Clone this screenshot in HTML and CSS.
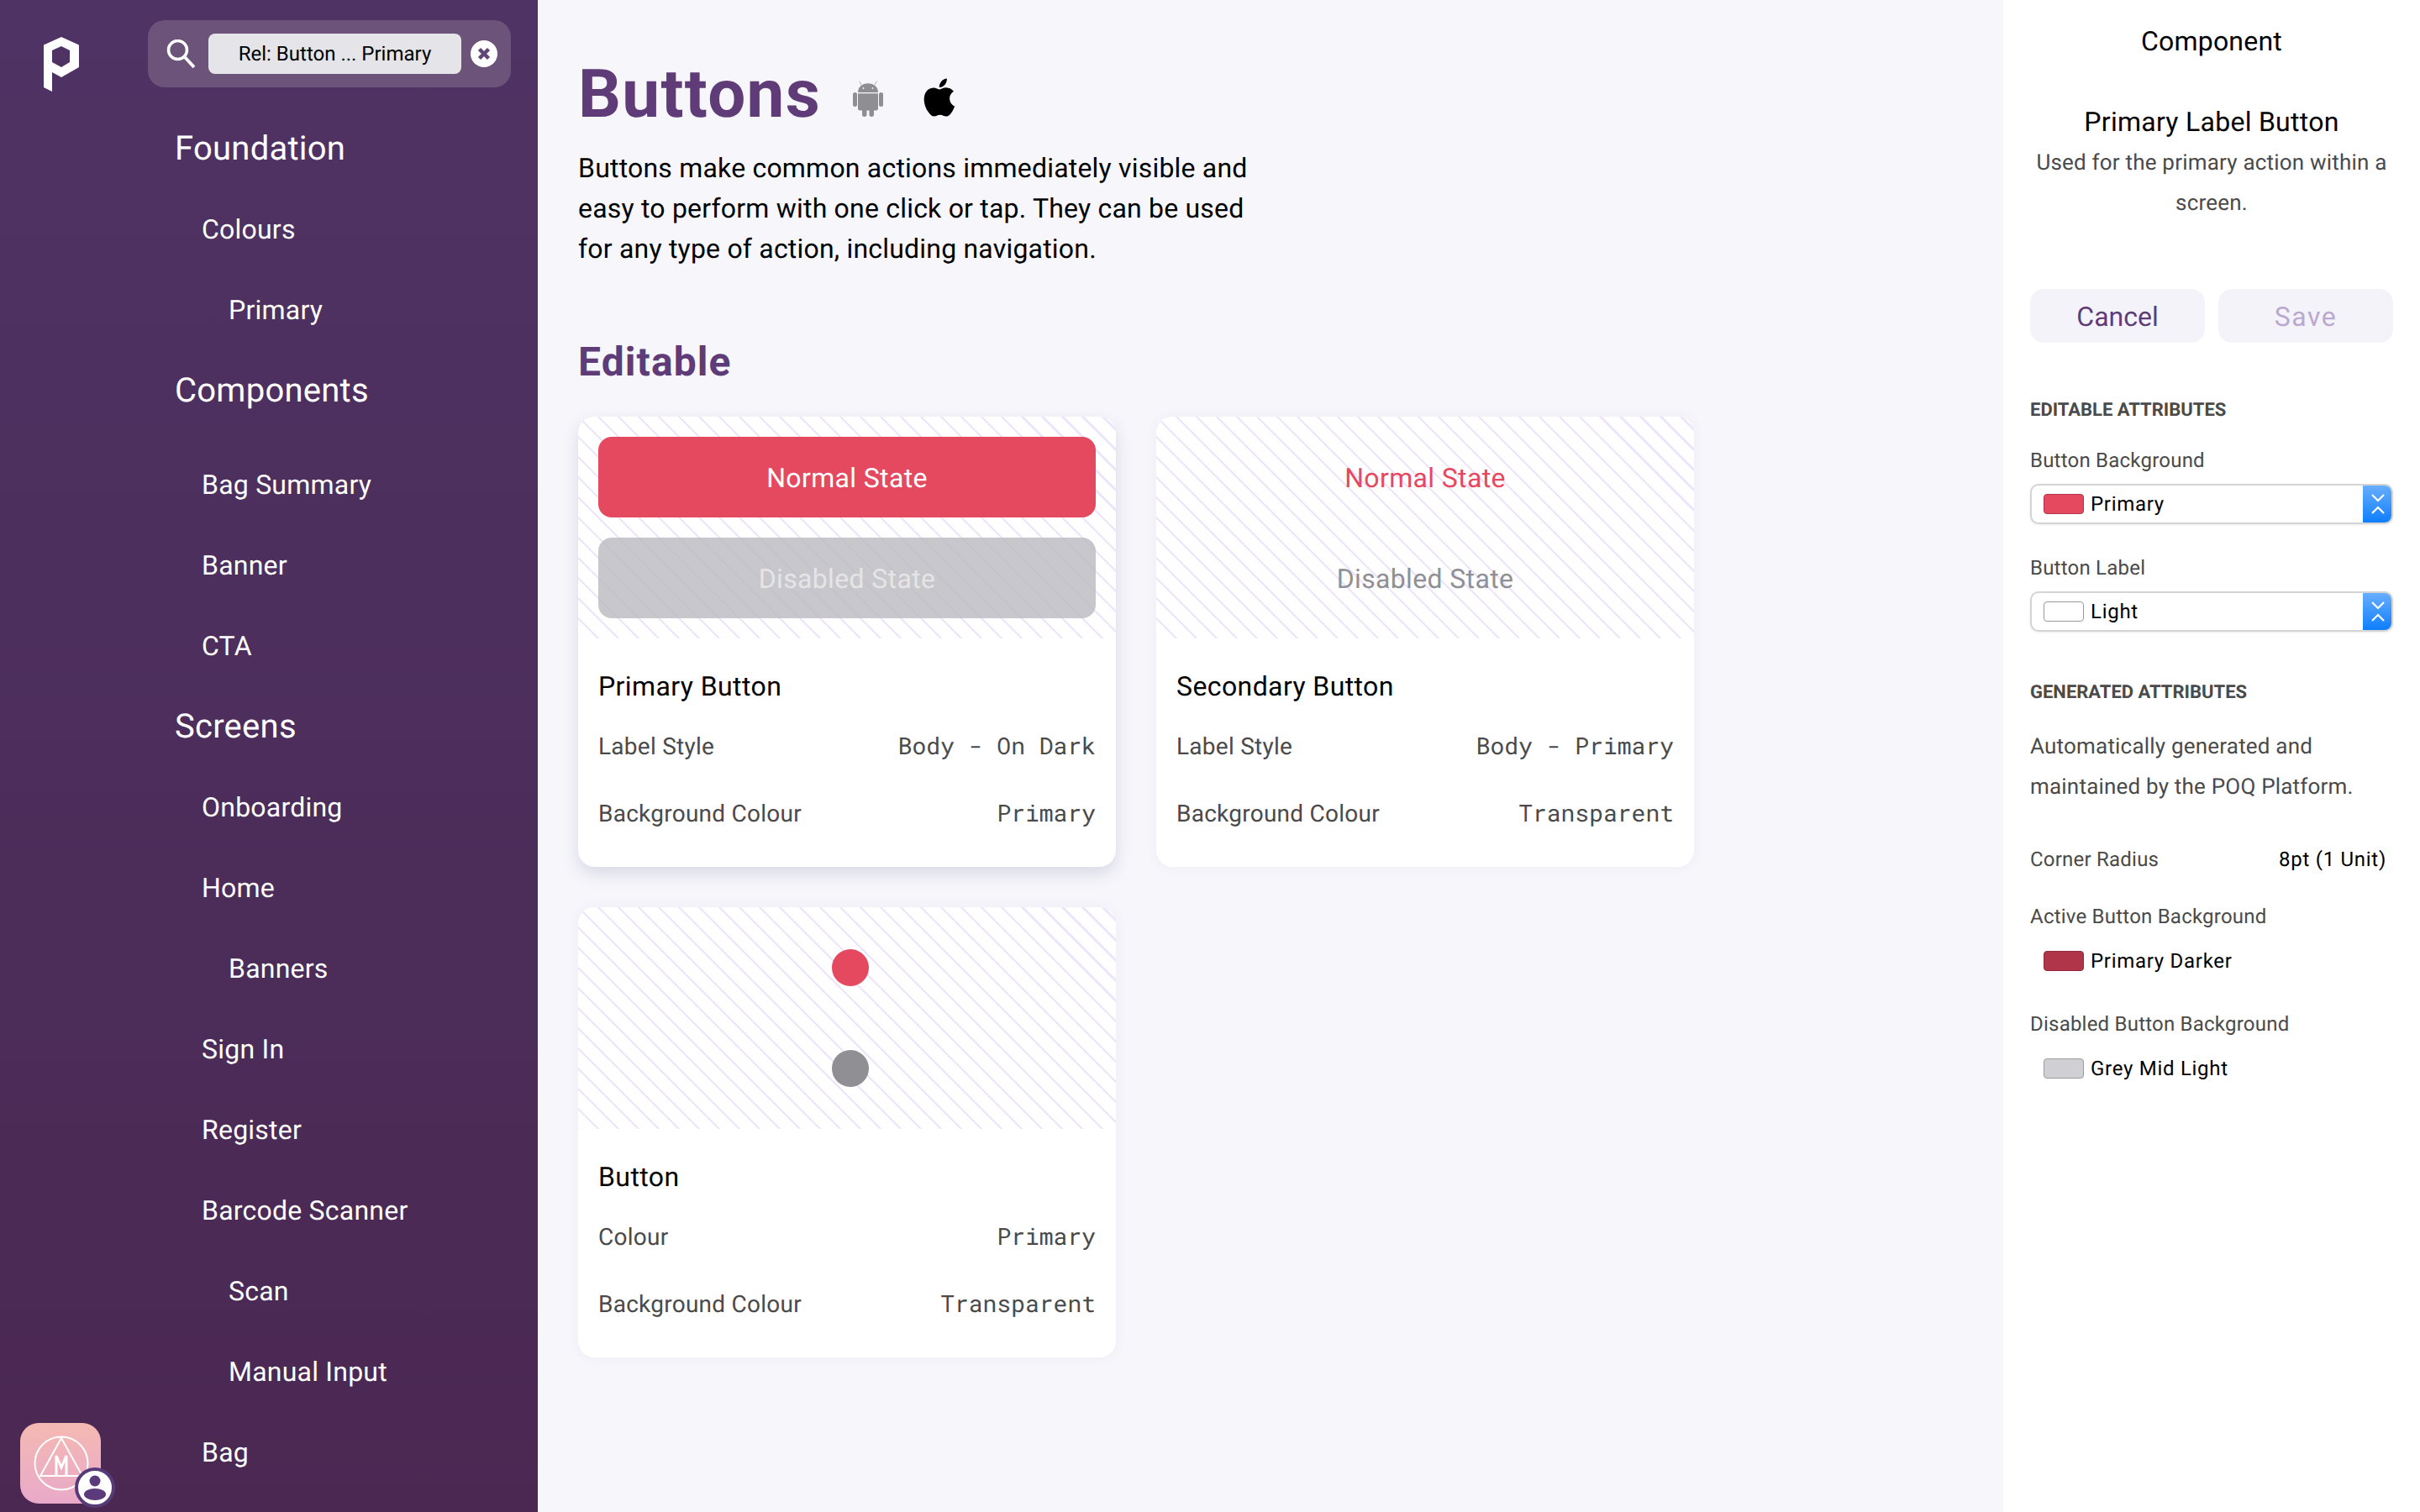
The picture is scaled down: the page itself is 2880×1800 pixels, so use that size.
FILE: index.html
```html
<!DOCTYPE html>
<html lang="en">
<head>
<meta charset="utf-8">
<title>Buttons</title>
<link rel="stylesheet" href="styles.css">
</head>
<body>
<div class="app">
  <aside class="sidebar">
    <div class="rail">
      <svg class="logo" viewBox="0 0 42 65"><path fill="#fff" fill-rule="evenodd" d="M21 0 42 9.500V36L21 48 10 42V65L0 60V9.500ZM21 11 10 16V30L21 36 31 30V16Z"/></svg>
      <div class="avatar">
        <svg class="avatar-art" viewBox="0 0 96 96"><circle cx="49" cy="48" r="31.500" fill="none" stroke="#fff" stroke-width="2"/><path d="M49 18 24 63H74Z" fill="none" stroke="#fff" stroke-width="2"/><path d="M43 62V39L49 53 55 39V62" fill="none" stroke="#fff" stroke-width="3"/></svg>
        <span class="avatar-badge">
          <svg viewBox="0 0 40 40"><circle cx="20" cy="12" r="6.500" fill="#5b3b7c"/><ellipse cx="20" cy="28" rx="13" ry="7" fill="#5b3b7c"/></svg>
        </span>
      </div>
    </div>
    <div class="navcol">
      <div class="search">
        <svg class="search-icon" viewBox="0 0 34 34"><circle cx="13.500" cy="12.500" r="11" fill="none" stroke="#fff" stroke-width="3.500"/><path d="M21 20 33 33" stroke="#fff" stroke-width="3.800"/></svg>
        <div class="search-pill">Rel: Button ... Primary</div>
        <svg class="search-clear" viewBox="0 0 32 32"><circle cx="16" cy="16" r="16" fill="#fff"/><path d="M10.500 10.500 21.500 21.500M21.500 10.500 10.500 21.500" stroke="#5f4674" stroke-width="4.500"/></svg>
      </div>
      <nav class="tree">
        <div class="n n0">Foundation</div>
        <div class="n n1">Colours</div>
        <div class="n n2">Primary</div>
        <div class="n n0 gapped">Components</div>
        <div class="n n1">Bag Summary</div>
        <div class="n n1">Banner</div>
        <div class="n n1">CTA</div>
        <div class="n n0">Screens</div>
        <div class="n n1">Onboarding</div>
        <div class="n n1">Home</div>
        <div class="n n2">Banners</div>
        <div class="n n1">Sign In</div>
        <div class="n n1">Register</div>
        <div class="n n1">Barcode Scanner</div>
        <div class="n n2">Scan</div>
        <div class="n n2">Manual Input</div>
        <div class="n n1">Bag</div>
      </nav>
    </div>
  </aside>

  <main class="main">
    <div class="title-row">
      <h1>Buttons</h1>
      <svg class="android" viewBox="0 0 36 43" fill="#8f8f93"><path d="M10 5 7.600.5M26 5 28.400.5" stroke="#a9a9ad" stroke-width=".9"/><path d="M6 14C6 7.500 11 3.300 18 3.300S30 7.500 30 14Z"/><path d="M6 15.300H30V33A2.500 2.500 0 0 1 27.500 35.500H8.500A2.500 2.500 0 0 1 6 33Z"/><rect x="0" y="14" width="5" height="17" rx="2.500"/><rect x="31" y="14" width="5" height="17" rx="2.500"/><rect x="11" y="30" width="5.500" height="13" rx="2.750"/><rect x="19.500" y="30" width="5.500" height="13" rx="2.750"/><circle cx="12.500" cy="9" r=".9" fill="#f6f6fb"/><circle cx="23.500" cy="9" r=".9" fill="#f6f6fb"/></svg>
      <svg class="apple" viewBox="0 0 24 24"><path fill="#000" d="M18.710 19.500c-.83 1.240-1.710 2.450-3.050 2.470-1.340.03-1.770-.79-3.290-.79-1.530 0-2 .77-3.270.82-1.310.05-2.300-1.320-3.140-2.530C4.250 17 2.940 12.450 4.700 9.390c.87-1.520 2.430-2.480 4.120-2.510 1.280-.02 2.500.87 3.290.87.78 0 2.260-1.070 3.810-.91.65.03 2.470.26 3.640 1.980-.09.06-2.170 1.280-2.150 3.810.03 3.020 2.650 4.030 2.680 4.040-.03.07-.42 1.440-1.380 2.830M13 3.500c.73-.83 1.940-1.460 2.940-1.500.13 1.170-.34 2.350-1.040 3.190-.69.85-1.830 1.510-2.950 1.420-.15-1.150.41-2.350 1.050-3.110z"/></svg>
    </div>
    <p class="intro">Buttons make common actions immediately visible and easy to perform with one click or tap. They can be used for any type of action, including navigation.</p>
    <h2>Editable</h2>
    <div class="cards">
      <article class="card card-active">
        <div class="stage stage-primary">
          <div class="btn btn-red">Normal State</div>
          <div class="btn btn-grey">Disabled State</div>
        </div>
        <div class="card-body">
          <h3>Primary Button</h3>
          <div class="row"><span>Label Style</span><code>Body - On Dark</code></div>
          <div class="row"><span>Background Colour</span><code>Primary</code></div>
        </div>
      </article>
      <article class="card">
        <div class="stage stage-primary">
          <div class="btn btn-text-red">Normal State</div>
          <div class="btn btn-text-grey">Disabled State</div>
        </div>
        <div class="card-body">
          <h3>Secondary Button</h3>
          <div class="row"><span>Label Style</span><code>Body - Primary</code></div>
          <div class="row"><span>Background Colour</span><code>Transparent</code></div>
        </div>
      </article>
      <article class="card">
        <div class="stage stage-dots">
          <span class="dot dot-red"></span>
          <span class="dot dot-grey"></span>
        </div>
        <div class="card-body">
          <h3>Button</h3>
          <div class="row"><span>Colour</span><code>Primary</code></div>
          <div class="row"><span>Background Colour</span><code>Transparent</code></div>
        </div>
      </article>
    </div>
  </main>

  <aside class="panel">
    <div class="panel-title">Component</div>
    <div class="panel-name">Primary Label Button</div>
    <p class="panel-desc">Used for the primary action within a screen.</p>
    <div class="panel-actions">
      <div class="pbtn">Cancel</div>
      <div class="pbtn pbtn-off">Save</div>
    </div>
    <div class="caps caps-first">EDITABLE ATTRIBUTES</div>
    <div class="lab lab-first">Button Background</div>
    <div class="select">
      <span class="sw sw-red"></span><span class="val">Primary</span>
      <span class="stepper"><svg viewBox="0 0 36 48"><path d="M11 13 18 20 25 13M11 35 18 28 25 35" fill="none" stroke="#fff" stroke-width="2.200"/></svg></span>
    </div>
    <div class="lab lab-next">Button Label</div>
    <div class="select">
      <span class="sw sw-white"></span><span class="val">Light</span>
      <span class="stepper"><svg viewBox="0 0 36 48"><path d="M11 13 18 20 25 13M11 35 18 28 25 35" fill="none" stroke="#fff" stroke-width="2.200"/></svg></span>
    </div>
    <div class="caps caps-second">GENERATED ATTRIBUTES</div>
    <p class="auto">Automatically generated and maintained by the POQ Platform.</p>
    <div class="radius"><span class="lab">Corner Radius</span><span class="val">8pt (1 Unit)</span></div>
    <div class="lab lab-active">Active Button Background</div>
    <div class="static"><span class="sw sw-dark"></span><span class="val">Primary Darker</span></div>
    <div class="lab lab-disabled">Disabled Button Background</div>
    <div class="static"><span class="sw sw-grey"></span><span class="val">Grey Mid Light</span></div>
  </aside>
</div>
</body>
</html>
```
FILE: styles.css
```css
* { box-sizing: border-box; }
html, body { margin: 0; padding: 0; width: 2880px; height: 1800px; overflow: hidden; }
body { font-family: Roboto, "Liberation Sans", sans-serif; background: #f6f6fb; color: #000; text-rendering: geometricPrecision; }
h1, h2, h3, p { margin: 0; font-weight: inherit; }

.app { display: flex; width: 2880px; height: 1800px; }

/* sidebar */
.sidebar { width: 640px; height: 1800px; flex: none; display: flex; overflow: hidden; background: linear-gradient(#4f3364, #4a2852); color: #fff; }
.rail { width: 176px; flex: none; display: flex; flex-direction: column; justify-content: space-between; padding: 44px 0 10px 24px; }
.logo { width: 42px; height: 65px; margin-left: 28px; display: block; }
.avatar { position: relative; width: 96px; height: 96px; border-radius: 22px; background: linear-gradient(#f4b9b2, #e9a9c9); }
.avatar-art { display: block; width: 96px; height: 96px; }
.avatar-badge { position: absolute; left: 65px; top: 53px; width: 48px; height: 48px; border-radius: 50%; background: #fff; border: 4px solid #573b78; }
.avatar-badge svg { display: block; width: 40px; height: 40px; }
.navcol { width: 432px; flex: none; padding-top: 24px; }
.search { height: 80px; border-radius: 20px; background: #6c5379; display: flex; align-items: center; padding: 0 17px 0 22px; }
.search-icon { width: 34px; height: 34px; flex: none; }
.search-pill { width: 301px; height: 48px; margin-left: 16px; flex: none; border-radius: 8px; background: #e5e4e9; color: #000; font-size: 24px; line-height: 48px; text-align: center; }
.search-clear { width: 32px; height: 32px; margin-left: 11px; flex: none; }
.tree { margin-top: 25px; }
.n { height: 96px; line-height: 96px; white-space: nowrap; }
.n0 { font-size: 40px; letter-spacing: .25px; padding-left: 32px; }
.n1 { font-size: 32px; letter-spacing: .22px; padding-left: 64px; }
.n2 { font-size: 32px; letter-spacing: .22px; padding-left: 96px; }
.gapped { margin-bottom: 16px; }

/* main */
.main { flex: 1; min-width: 0; padding: 64px 0 0 48px; }
.title-row { display: flex; align-items: flex-start; height: 96px; }
h1 { font-size: 80px; letter-spacing: 1.300px; line-height: 97px; font-weight: 700; color: #5f3b78; }
.android { width: 36px; height: 43px; margin: 32px 0 0 38px; flex: none; }
.apple { width: 54px; height: 54px; margin: 24.500px 0 0 40px; flex: none; }
.intro { width: 810px; margin-top: 16px; font-size: 32px; letter-spacing: .2px; line-height: 48px; }
h2 { margin-top: 81px; margin-bottom: -1px; font-size: 48px; letter-spacing: 1.100px; line-height: 60px; font-weight: 700; color: #5f3b78; }
.cards { display: grid; grid-template-columns: 640px 640px; gap: 48px; margin-top: 36px; }
.card { height: 536px; border-radius: 20px; overflow: hidden; background: #fff; box-shadow: 0 0 16px rgba(60, 50, 120, .05); }
.card-active { box-shadow: 0 8px 20px rgba(60, 55, 100, .15); }
.stage { height: 264px; background: repeating-linear-gradient(45deg, #eee5fc 0, #eee5fc 1.400px, #fff 1.400px, #fff 15.570px, #eee5fc 15.570px, #eee5fc 16.971px); }
.stage-primary { display: flex; flex-direction: column; gap: 24px; padding: 24px; }
.stage-dots { display: flex; flex-direction: column; align-items: center; gap: 76px; padding: 50px 0 0 8px; }
.btn { height: 96px; border-radius: 16px; font-size: 32px; letter-spacing: .35px; line-height: 98px; text-align: center; flex: none; }
.btn-red { background: #e5495f; color: #fff; }
.btn-grey { background: rgba(182, 182, 187, .75); color: rgba(255, 255, 255, .55); }
.btn-text-red { color: #e5495f; }
.btn-text-grey { color: #908f94; }
.dot { width: 44px; height: 44px; border-radius: 50%; flex: none; }
.dot-red { background: #e5495f; }
.dot-grey { background: #908f94; }
.card-body { padding: 24px 24px 0; }
h3 { margin: 1px 0 -1px; font-size: 32px; letter-spacing: .4px; line-height: 64px; font-weight: 400; }
.row { display: flex; justify-content: space-between; align-items: center; height: 80px; font-size: 28px; letter-spacing: .25px; color: #4a4a4a; }
.row code { margin-top: -2px; font-family: "Roboto Mono", "Liberation Mono", monospace; font-size: 28px; letter-spacing: 0; color: #4a4a4a; }

/* panel */
.panel { width: 496px; flex: none; background: #fff; padding: 0 32px; }
.panel-title { margin-top: 25px; font-size: 32px; letter-spacing: .2px; line-height: 48px; text-align: center; }
.panel-name { margin-top: 48px; font-size: 32px; letter-spacing: .27px; line-height: 48px; text-align: center; }
.panel-desc { margin-top: 1px; font-size: 26px; letter-spacing: .2px; line-height: 48px; text-align: center; color: #4a4a4a; }
.panel-actions { display: flex; gap: 16px; margin-top: 78px; }
.pbtn { width: 208px; height: 64px; border-radius: 16px; background: #f5f3fa; color: #5f3b78; font-size: 32px; line-height: 66px; text-align: center; }
.pbtn-off { color: #bba8cf; letter-spacing: 1.500px; }
.caps { font-size: 22px; font-weight: 700; line-height: 34px; margin-bottom: -2px; color: #4a4a4a; }
.caps-first { margin-top: 64px; }
.lab { font-size: 24px; letter-spacing: .22px; line-height: 32px; color: #4a4a4a; }
.lab-first { margin-top: 28px; }
.lab-next { margin-top: 36px; }
.select { position: relative; display: flex; align-items: center; height: 48px; margin-top: 12px; padding-left: 16px; border-radius: 10px; background: #fff; border: 2px solid #d4d4d4; box-shadow: 0 1px 3px rgba(0, 0, 0, .08); overflow: hidden; }
.select .sw { margin-left: -2px; }
.sw { width: 48px; height: 24px; border-radius: 4px; flex: none; border: 1px solid #999; }
.sw-red { background: #e5495f; border-color: #b03548; }
.sw-white { background: #fff; }
.sw-dark { background: #b03548; border-color: #94293b; }
.sw-grey { background: #cfcfd4; border-color: #9c9ca0; }
.val { font-size: 24px; margin-left: 8px; letter-spacing: .72px; }
.stepper { position: absolute; right: -2px; top: -2px; width: 36px; height: 48px; background: linear-gradient(#6cb0ff, #0a7cff); }
.stepper svg { display: block; width: 36px; height: 48px; }
.caps-second { margin-top: 56px; }
.auto { margin-top: 25px; font-size: 26px; letter-spacing: .2px; line-height: 48px; color: #4a4a4a; }
.radius { display: flex; justify-content: space-between; align-items: center; height: 32px; margin-top: 46px; padding-right: 8px; }
.lab-active { margin-top: 36px; }
.static { display: flex; align-items: center; height: 32px; margin-top: 21px; padding-left: 16px; }
.lab-disabled { margin-top: 43px; }
```
